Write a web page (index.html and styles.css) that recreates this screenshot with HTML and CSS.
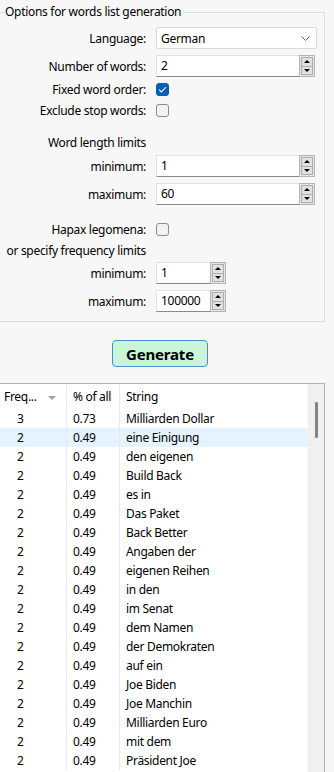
FILE: index.html
```html
<!DOCTYPE html>
<html lang="en">
<head>
    <meta charset="UTF-8">
    <meta name="viewport" content="width=device-width, initial-scale=1.0">
    <title>Words list generation</title>
    <link rel="stylesheet" href="styles.css">
</head>
<body>
    <div class="page">
        <fieldset class="options">
            <legend>Options for words list generation</legend>

            <div class="row">
                <label class="label">Language:</label>
                <div class="combo">
                    <span>German</span>
                    <svg class="chevron" width="9" height="5" viewBox="0 0 9 5"><path d="M0.5 0.5 L4.5 4.5 L8.5 0.5" fill="none" stroke="#606060" stroke-width="1"/></svg>
                </div>
            </div>

            <div class="row">
                <label class="label">Number of words:</label>
                <div class="spin wide">
                    <div class="spin-field">2</div>
                    <div class="spin-buttons">
                        <div class="spin-btn"><span class="tri up"></span></div>
                        <div class="spin-btn"><span class="tri down"></span></div>
                    </div>
                </div>
            </div>

            <div class="row check-row">
                <label class="label">Fixed word order:</label>
                <span class="checkbox checked">
                    <svg width="9" height="7" viewBox="0 0 9 7"><path d="M1 3.6 L3.4 6 L8 1.2" fill="none" stroke="#fff" stroke-width="1.2"/></svg>
                </span>
            </div>

            <div class="row check-row">
                <label class="label">Exclude stop words:</label>
                <span class="checkbox"></span>
            </div>

            <div class="row title-row">
                <span class="label">Word length limits</span>
            </div>

            <div class="row tight">
                <label class="label">minimum:</label>
                <div class="spin wide">
                    <div class="spin-field">1</div>
                    <div class="spin-buttons">
                        <div class="spin-btn"><span class="tri up"></span></div>
                        <div class="spin-btn"><span class="tri down"></span></div>
                    </div>
                </div>
            </div>

            <div class="row">
                <label class="label">maximum:</label>
                <div class="spin wide">
                    <div class="spin-field">60</div>
                    <div class="spin-buttons">
                        <div class="spin-btn"><span class="tri up"></span></div>
                        <div class="spin-btn"><span class="tri down"></span></div>
                    </div>
                </div>
            </div>

            <div class="row check-row hapax">
                <label class="label">Hapax legomena:</label>
                <span class="checkbox"></span>
            </div>

            <div class="row check-row">
                <span class="label">or specify frequency limits</span>
            </div>

            <div class="row tight">
                <label class="label">minimum:</label>
                <div class="spin small">
                    <div class="spin-field">1</div>
                    <div class="spin-buttons">
                        <div class="spin-btn"><span class="tri up"></span></div>
                        <div class="spin-btn"><span class="tri down"></span></div>
                    </div>
                </div>
            </div>

            <div class="row">
                <label class="label">maximum:</label>
                <div class="spin small">
                    <div class="spin-field">100000</div>
                    <div class="spin-buttons">
                        <div class="spin-btn"><span class="tri up"></span></div>
                        <div class="spin-btn"><span class="tri down"></span></div>
                    </div>
                </div>
            </div>
        </fieldset>

        <div class="button-bar">
            <button class="generate">Generate</button>
        </div>

        <div class="list">
            <div class="list-body">
                <table class="words">
                    <thead>
                        <tr>
                            <th class="col-freq">Freq... <span class="sort"></span></th>
                            <th class="col-pct">% of all</th>
                            <th class="col-str">String</th>
                        </tr>
                    </thead>
                    <tbody id="rows"></tbody>
                </table>
            </div>
            <div class="scrollbar"><div class="thumb"></div></div>
        </div>
    </div>

    <script>
        const words = [
            [3, '0.73', 'Milliarden Dollar'],
            [2, '0.49', 'eine Einigung'],
            [2, '0.49', 'den eigenen'],
            [2, '0.49', 'Build Back'],
            [2, '0.49', 'es in'],
            [2, '0.49', 'Das Paket'],
            [2, '0.49', 'Back Better'],
            [2, '0.49', 'Angaben der'],
            [2, '0.49', 'eigenen Reihen'],
            [2, '0.49', 'in den'],
            [2, '0.49', 'im Senat'],
            [2, '0.49', 'dem Namen'],
            [2, '0.49', 'der Demokraten'],
            [2, '0.49', 'auf ein'],
            [2, '0.49', 'Joe Biden'],
            [2, '0.49', 'Joe Manchin'],
            [2, '0.49', 'Milliarden Euro'],
            [2, '0.49', 'mit dem'],
            [2, '0.49', 'Präsident Joe']
        ];

        const tbody = document.getElementById('rows');
        words.forEach((w, i) => {
            const tr = document.createElement('tr');
            if (i === 1) tr.className = 'selected';
            tr.innerHTML = `<td class="col-freq">${w[0]}</td><td class="col-pct">${w[1]}</td><td class="col-str">${w[2]}</td>`;
            tbody.appendChild(tr);
        });
    </script>
</body>
</html>
```

FILE: styles.css
```css
body {
    margin: 0;
    padding: 0;
    background-color: #f7f7f7;
    font-family: "Noto Sans", "Open Sans", sans-serif;
    font-size: 12px;
    letter-spacing: -0.3px;
    color: #000;
    overflow: hidden;
    height: 772px;
}

.page {
    width: 326px;
    margin-left: -1px;
}

/* Group box */
.options {
    margin: 4px 0 0 0;
    padding: 7px 0 9px 0;
    border: 1px solid #dcdcdc;
    min-width: 0;
}
.options legend {
    margin-left: 4px;
    padding: 0 2px 0 1px;
    line-height: 16px;
    font-size: 12px;
}

.row {
    display: flex;
    align-items: center;
    height: 22px;
    margin-top: 6px;
}
.row:first-of-type {
    margin-top: 0;
}
.row.check-row {
    height: 18px;
    margin-top: 3px;
}
.row.title-row {
    height: 20px;
    margin-top: 13px;
}
.row.tight {
    margin-top: 3px;
}
.row.hapax {
    margin-top: 15px;
}

.label {
    width: 146px;
    flex-shrink: 0;
    text-align: right;
    white-space: nowrap;
    margin-right: 10px;
}

/* Combo box */
.combo {
    width: 149px;
    height: 20px;
    border: 1px solid #dadada;
    background-color: #fff;
    border-radius: 2px;
    display: flex;
    align-items: center;
    justify-content: space-between;
    padding: 0 6px 0 4px;
}
.chevron {
    display: block;
}

/* Spin boxes */
.spin {
    display: flex;
    height: 22px;
}
.spin.wide {
    width: 159px;
}
.spin.small {
    width: 70px;
}
.spin-field {
    flex-grow: 1;
    background-color: #fff;
    border: 1px solid #e3e3e3;
    border-bottom-color: #8a8a8a;
    border-right: none;
    padding-left: 4px;
    line-height: 20px;
}
.spin-buttons {
    width: 16px;
    display: flex;
    flex-direction: column;
    border: 1px solid #b4b4b4;
    background-color: #e6e6e6;
    box-sizing: border-box;
    padding: 1px;
}
.spin-btn {
    flex: 1;
    display: flex;
    align-items: center;
    justify-content: center;
    border: 1px solid #adadad;
    background-color: #e1e1e1;
}
.spin-btn + .spin-btn {
    border-top: none;
}
.tri {
    width: 0;
    height: 0;
    border-left: 3px solid transparent;
    border-right: 3px solid transparent;
}
.tri.up {
    border-bottom: 3px solid #000;
}
.tri.down {
    border-top: 3px solid #000;
}

/* Check boxes */
.checkbox {
    width: 11px;
    height: 11px;
    border: 1px solid #8b8b8b;
    border-radius: 3px;
    background-color: #f3f3f3;
    display: flex;
    align-items: center;
    justify-content: center;
}
.checkbox.checked {
    background-color: #005fb8;
    border-color: #005fb8;
}

/* Generate button */
.button-bar {
    display: flex;
    justify-content: center;
    padding: 18px 0 16px 0;
    width: 322px;
}
.generate {
    width: 96px;
    height: 27px;
    background-color: #c9f6d6;
    border: 1px solid #4c8ccc;
    border-radius: 4px;
    font-family: "Noto Sans", "Open Sans", sans-serif;
    font-weight: bold;
    font-size: 15px;
    letter-spacing: -0.2px;
    color: #000;
    padding: 0;
    cursor: pointer;
}

/* Results list */
.list {
    display: flex;
    background-color: #fff;
    border: 1px solid #b0b0b0;
    border-bottom: none;
    height: 400px;
}
.list-body {
    flex-grow: 1;
    overflow: hidden;
}
.words {
    border-collapse: collapse;
    table-layout: fixed;
    width: 100%;
}
.words th,
.words td {
    padding: 0 0 0 6px;
    text-align: left;
    font-weight: normal;
    white-space: nowrap;
    overflow: hidden;
}
.words th {
    height: 25px;
}
.words td {
    height: 19px;
}
.words .col-freq {
    width: 60px;
    border-right: 1px solid #e8e8e8;
}
.words th.col-freq {
    padding-left: 4px;
    width: 62px;
}
.words td.col-freq {
    padding-left: 17px;
    width: 49px;
}
.words .col-pct {
    width: 46px;
    border-right: 1px solid #e8e8e8;
}
.words tr.selected td {
    background-color: #e5f3ff;
}
.sort {
    display: inline-block;
    width: 0;
    height: 0;
    border-left: 4px solid transparent;
    border-right: 4px solid transparent;
    border-top: 4px solid #a0a0a0;
    margin-left: 9px;
    vertical-align: middle;
}

.scrollbar {
    width: 16px;
    flex-shrink: 0;
    background-color: #f0f0f0;
}
.thumb {
    width: 3px;
    height: 36px;
    margin: 18px 0 0 7px;
    background-color: #858585;
    border-radius: 1px;
}
```
